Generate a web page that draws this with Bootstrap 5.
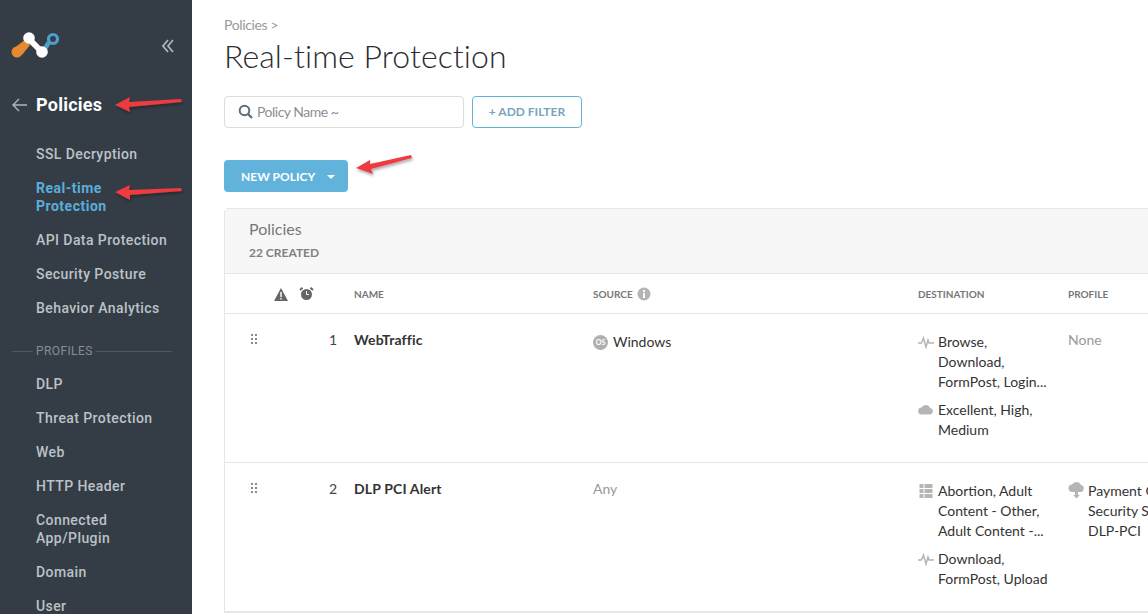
<!DOCTYPE html>
<html lang="en">
<head>
<meta charset="utf-8">
<title>Real-time Protection</title>
<link href="https://cdn.jsdelivr.net/npm/bootstrap@5.3.0/dist/css/bootstrap.min.css" rel="stylesheet">
<style>
html,body{height:100%;overflow:hidden}
body{font-family:"Lato","Liberation Sans",sans-serif;background:#fff;color:#333}
.shell{width:1148px;height:614px;overflow:hidden;position:relative}
.side{width:192px;height:614px;flex:none;background:#343d46;font-family:"Roboto","Liberation Sans",sans-serif;overflow:hidden}
.side-top{height:93px;padding:31px 18px 0 11px}
.side-title{height:24px;padding-left:12px;margin-bottom:28px}
.side-title span{font-size:18px;font-weight:700;color:#fff;line-height:24px;margin-left:8px;letter-spacing:.25px}
.side-link{display:block;padding:0 20px 0 36px;margin-bottom:16px;font-size:14px;line-height:18px;color:#bcc2c6;font-weight:500;letter-spacing:.42px;text-decoration:none}
.side-link.on{color:#5aaedb;font-weight:700;letter-spacing:.5px}
.side-sec{padding:0 20px 0 12px;height:18px;margin-bottom:15px;margin-top:25px;font-size:12px;color:#858d94;letter-spacing:.4px}
.side-sec i{display:block;height:1px;background:#4f5963;flex:1}
.side-sec i:first-child{flex:0 0 21px}
.side-sec b{font-weight:400;margin:0 3px}
.main-area{width:956px;flex:none;padding:16px 0 0 32px;overflow:hidden}
.crumb{font-size:14px;line-height:17px;color:#999;letter-spacing:-.35px}
.page-h{font-size:32px;font-weight:300;line-height:38px;color:#2b2b30;margin:4px 0 21px;letter-spacing:.08px}
.searchbox{width:240px;height:32px;border:1px solid #ddd;border-radius:4px;padding:0 0 2px 13px;font-size:14px;color:#8a8f94;letter-spacing:-.5px}
.add-btn{width:110px;height:32px;border:1px solid #62b3dc;border-radius:4px;background:#fff;color:#7aa3bf;font-size:12px;font-weight:700;padding:0}
.new-btn{width:124px;height:32px;border:0;border-radius:4px;background:#62b3dc;color:#fff;font-size:12px;font-weight:700;padding:1px 0 0 17px;margin-top:32px}
.new-btn:after{content:"";border-top:4px solid #fff;border-left:4px solid transparent;border-right:4px solid transparent;margin-left:12px}
.pol-card{width:1100px;margin-top:16px;border:1px solid #e6e6e6;border-radius:4px 0 0 0;background:#fff}
.pol-head{height:65px;background:#f7f7f7;border-bottom:1px solid #e6e6e6;padding:10px 0 0 24px}
.pol-title{font-size:16px;line-height:20px;color:#777}
.pol-count{font-size:12px;font-weight:700;color:#808080;line-height:14px;margin-top:7px}
.grid-row{display:grid;grid-template-columns:112px 256px 325px 150px 1fr;border-bottom:1px solid #e6e6e6}
.hrow{height:40px;align-items:center;font-size:10px;font-weight:700;color:#777;padding-top:1px}
.brow{height:149px;padding-top:16px;font-size:14px;line-height:20px;color:#333}
.hcell-alert{padding-left:49px;display:flex;gap:11px;align-items:center}
.hname{margin-left:17px}
.numcell{display:flex;justify-content:space-between;align-items:flex-start;padding-left:25px;color:#444}
.pol-name{font-weight:700;color:#333;margin-left:17px;white-space:nowrap;letter-spacing:.15px}
.muted-t{color:#999}
.dest-item{display:flex;gap:4px;margin-top:2px;margin-bottom:8px}
.dest-item svg{flex:none;margin-top:3px}
.dest-text{white-space:nowrap}
.prof-item{display:flex;gap:3px;margin-top:2px;align-items:flex-start;overflow:hidden}
.prof-item svg{flex:none;margin-top:0}
.dots{margin-top:3px}
.src{display:flex;align-items:center;align-self:flex-start;gap:5px;margin-top:2px}
.arrow{position:absolute;pointer-events:none;overflow:visible}
</style>
</head>
<body>
<div class="shell d-flex">
  <nav class="side">
    <div class="side-top d-flex justify-content-between">
      <svg width="50" height="30" viewBox="0 0 50 30"><path d="M38 11 32 21" stroke="#4e9fcb" stroke-width="4.500"/><circle cx="42" cy="8" r="4.500" fill="none" stroke="#4e9fcb" stroke-width="3.200"/><path d="M2 18 15 8l4 6-8 10z" fill="#e58a2e"/><circle cx="6" cy="21" r="5.500" fill="#e58a2e"/><path d="M18 8 31 21" stroke="#fff" stroke-width="6"/><circle cx="18" cy="7" r="5.800" fill="#fff"/><circle cx="31" cy="21" r="5.800" fill="#fff"/></svg>
      <svg class="mt-2" width="12" height="14" viewBox="0 0 12 14" fill="none" stroke="#aeb5ba" stroke-width="1.800"><path d="M6 1 1 7l5 6M11 1 6 7l5 6"/></svg>
    </div>
    <div class="side-title d-flex align-items-center">
      <svg width="16" height="14" viewBox="0 0 16 14" fill="none" stroke="#aeb5ba" stroke-width="1.400"><path d="M7 1 1 7l6 6M1 7h14"/></svg>
      <span>Policies</span>
    </div>
    <a class="side-link" href="#">SSL Decryption</a>
    <a class="side-link on" href="#">Real-time<br>Protection</a>
    <a class="side-link" href="#">API Data Protection</a>
    <a class="side-link" href="#">Security Posture</a>
    <a class="side-link" href="#">Behavior Analytics</a>
    <div class="side-sec d-flex align-items-center"><i></i><b>PROFILES</b><i></i></div>
    <a class="side-link" href="#">DLP</a>
    <a class="side-link" href="#">Threat Protection</a>
    <a class="side-link" href="#">Web</a>
    <a class="side-link" href="#">HTTP Header</a>
    <a class="side-link" href="#">Connected<br>App/Plugin</a>
    <a class="side-link" href="#">Domain</a>
    <a class="side-link" href="#">User</a>
  </nav>
  <main class="main-area">
    <div class="crumb">Policies &gt;</div>
    <h1 class="page-h">Real-time Protection</h1>
    <div class="d-flex gap-2">
      <div class="searchbox d-flex align-items-center gap-1">
        <svg width="15" height="15" viewBox="0 0 15 15" fill="none" stroke="#5f6d78" stroke-width="2"><circle cx="6.500" cy="6.500" r="4.800"/><path d="m10 10 4 4" stroke-width="2.400"/></svg>
        <span>Policy Name ~</span>
      </div>
      <button class="btn add-btn" type="button">+ ADD FILTER</button>
    </div>
    <button class="btn new-btn d-flex align-items-center" type="button">NEW POLICY</button>
    <section class="pol-card">
      <div class="pol-head">
        <div class="pol-title">Policies</div>
        <div class="pol-count">22 CREATED</div>
      </div>
      <div class="grid-row hrow">
        <div class="hcell-alert">
          <svg width="14" height="13" viewBox="0 0 14 13"><path d="M7 0 14 13H0z" fill="#666"/><path d="M6.300 4h1.400v5H6.300zM6.300 10h1.400v1.500H6.300z" fill="#fff"/></svg>
          <svg width="15" height="14" viewBox="0 0 15 14"><circle cx="7.500" cy="7.500" r="5.500" fill="#666"/><path d="M1 3 3.500.8M14 3 11.500.8" stroke="#666" stroke-width="2"/><path d="M7.500 4v3.500h2.500" stroke="#fff" fill="none"/></svg>
        </div>
        <div><span class="hname">NAME</span></div>
        <div class="d-flex align-items-center gap-1"><span>SOURCE</span>
          <svg width="14" height="14" viewBox="0 0 14 14"><circle cx="7" cy="7" r="6.500" fill="#b5b5b5"/><path d="M6 3h2v2H6zM6 6h2v5H6z" fill="#fff"/></svg>
        </div>
        <div>DESTINATION</div>
        <div>PROFILE</div>
      </div>
      <div class="grid-row brow">
        <div class="numcell">
          <svg class="dots" width="8" height="12" viewBox="0 0 8 12" fill="#8a8a8a"><path d="M1 1h2v2H1zM5 1h2v2H5zM1 5h2v2H1zM5 5h2v2H5zM1 9h2v2H1zM5 9h2v2H5z"/></svg>
          <span>1</span>
        </div>
        <div><span class="pol-name">WebTraffic</span></div>
        <div class="src">
          <svg width="15" height="15" viewBox="0 0 15 15"><circle cx="7.500" cy="7.500" r="7.500" fill="#b0b0b0"/><text x="7.500" y="10" font-size="7" font-weight="700" fill="#fff" text-anchor="middle">OS</text></svg>
          <span>Windows</span>
        </div>
        <div>
          <div class="dest-item">
            <svg width="16" height="14" viewBox="0 0 16 14" fill="none" stroke="#b5b5b5" stroke-width="1.500"><path d="M0 8h3.500l2-5 2.500 9 2-7 1 3h5"/></svg>
            <div class="dest-text">Browse,<br>Download,<br>FormPost, Login...</div>
          </div>
          <div class="dest-item">
            <svg width="16" height="14" viewBox="0 0 16 14" fill="#b5b5b5"><path d="M4 11.500a3.500 3.500 0 0 1-.5-7 4.800 4.800 0 0 1 8.700.5 3.300 3.300 0 0 1-.2 6.500z"/></svg>
            <div class="dest-text">Excellent, High,<br>Medium</div>
          </div>
        </div>
        <div class="muted-t">None</div>
      </div>
      <div class="grid-row brow">
        <div class="numcell">
          <svg class="dots" width="8" height="12" viewBox="0 0 8 12" fill="#8a8a8a"><path d="M1 1h2v2H1zM5 1h2v2H5zM1 5h2v2H1zM5 5h2v2H5zM1 9h2v2H1zM5 9h2v2H5z"/></svg>
          <span>2</span>
        </div>
        <div><span class="pol-name">DLP PCI Alert</span></div>
        <div class="muted-t">Any</div>
        <div>
          <div class="dest-item">
            <svg width="16" height="14" viewBox="0 0 16 14" fill="#b5b5b5"><path d="M1.500 0h4v4h-4zM6.500 0h8v4h-8zM1.500 5h4v4h-4zM6.500 5h8v4h-8zM1.500 10h4v4h-4zM6.500 10h8v4h-8z"/></svg>
            <div class="dest-text">Abortion, Adult<br>Content - Other,<br>Adult Content -...</div>
          </div>
          <div class="dest-item">
            <svg width="16" height="14" viewBox="0 0 16 14" fill="none" stroke="#b5b5b5" stroke-width="1.500"><path d="M0 8h3.500l2-5 2.500 9 2-7 1 3h5"/></svg>
            <div class="dest-text">Download,<br>FormPost, Upload</div>
          </div>
        </div>
        <div class="prof-item">
          <svg width="17" height="18" viewBox="0 0 17 18" fill="#b5b5b5"><path d="M4.500 11a3.700 3.700 0 0 1-.5-7.400 5 5 0 0 1 9 .5 3.500 3.500 0 0 1-.5 6.900H10v3h1.800l-3.300 3.500-3.300-3.500H7v-3z"/></svg>
          <div class="dest-text">Payment Card Industry<br>Security Standard,<br>DLP-PCI</div>
        </div>
      </div>
    </section>
  </main>
  <svg class="arrow" width="1148" height="614" viewBox="0 0 1148 614">
    <defs><filter id="sh" x="-20%" y="-50%" width="140%" height="220%"><feDropShadow dx="1" dy="2" stdDeviation="1.500" flood-color="#000" flood-opacity=".35"/></filter></defs>
    <g fill="#ee3a3f" filter="url(#sh)">
      <path d="M115 105 130 97 129 102 181 99 182 102 129 107 130 112z"/>
      <path d="M115 192 130 185 129 190 181 188 182 191 130 195 130 200z"/>
      <path d="M356 168 370 160 370 164 411 155 412 158 371 169 373 174z"/>
    </g>
  </svg>
</div>
</body>
</html>
